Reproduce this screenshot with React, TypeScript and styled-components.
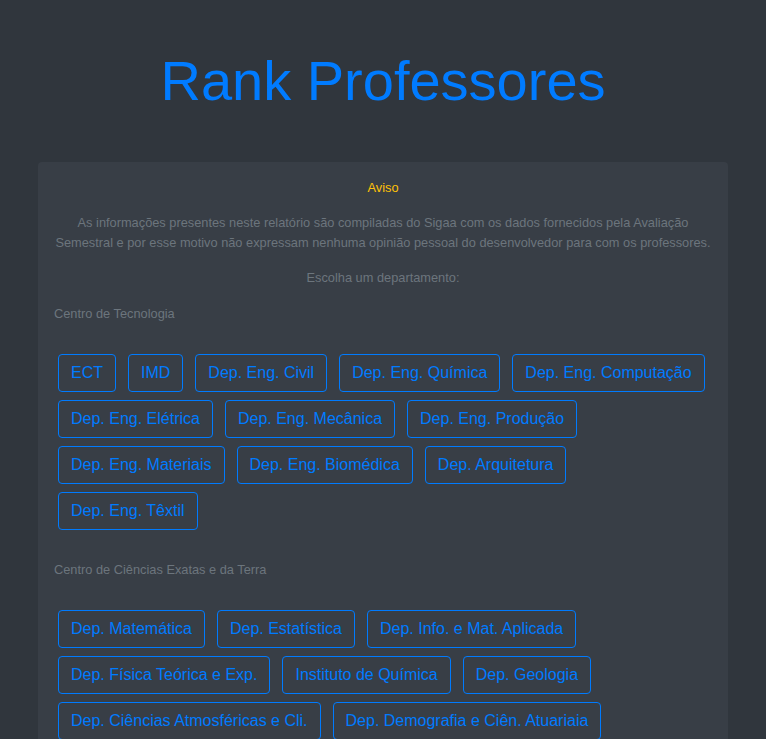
import React from "react";
import styled, { createGlobalStyle } from "styled-components";

const GlobalStyle = createGlobalStyle`
  html, body {
    margin: 0;
    padding: 0;
    background: #30363d;
  }
  body {
    font-family: "Liberation Sans", Arial, sans-serif;
  }
  * { box-sizing: border-box; }
`;

const Page = styled.div`
  min-height: 739px;
  background: #30363d;
  padding: 0 38px;
`;

const Header = styled.header`
  padding: 47px 0 48px;
  text-align: center;
`;

const Title = styled.h1`
  margin: 0;
  font-family: "Liberation Sans", Arial, sans-serif;
  font-weight: 300;
  font-size: 56px;
  line-height: 1.2;
  color: #007bff;
`;

const Card = styled.main`
  background: #383e46;
  border-radius: 4px;
  padding: 16px 16px 24px;
`;

const Notice = styled.p<{ $tone?: "warn" | "muted"; $last?: boolean }>`
  margin: 0 0 ${(p) => (p.$last ? "0" : "16px")};
  text-align: center;
  font-size: 12.8px;
  line-height: 1.5;
  color: ${(p) => (p.$tone === "warn" ? "#ffc107" : "#6c757d")};
`;

const SectionTitle = styled.h6`
  margin: 17px 0 0;
  font-size: 12.8px;
  font-weight: 400;
  line-height: 1.5;
  color: #6c757d;
`;

const ButtonGrid = styled.div`
  display: flex;
  flex-wrap: wrap;
  column-gap: 4px;
  margin-top: 27px;
  margin-bottom: 26px;
`;

const DeptButton = styled.button`
  margin: 4px;
  padding: 6px 12px;
  border: 1px solid #007bff;
  border-radius: 4px;
  background: transparent;
  color: #007bff;
  font-family: "Liberation Sans", Arial, sans-serif;
  font-size: 16px;
  line-height: 1.5;
  cursor: pointer;
  white-space: nowrap;
`;

const sections = [
  {
    name: "Centro de Tecnologia",
    depts: [
      "ECT",
      "IMD",
      "Dep. Eng. Civil",
      "Dep. Eng. Química",
      "Dep. Eng. Computação",
      "Dep. Eng. Elétrica",
      "Dep. Eng. Mecânica",
      "Dep. Eng. Produção",
      "Dep. Eng. Materiais",
      "Dep. Eng. Biomédica",
      "Dep. Arquitetura",
      "Dep. Eng. Têxtil",
    ],
  },
  {
    name: "Centro de Ciências Exatas e da Terra",
    depts: [
      "Dep. Matemática",
      "Dep. Estatística",
      "Dep. Info. e Mat. Aplicada",
      "Dep. Física Teórica e Exp.",
      "Instituto de Química",
      "Dep. Geologia",
      "Dep. Ciências Atmosféricas e Cli.",
      "Dep. Demografia e Ciên. Atuariaia",
    ],
  },
];

export default function App() {
  return (
    <>
      <GlobalStyle />
      <Page>
        <Header>
          <Title>Rank Professores</Title>
        </Header>
        <Card>
          <Notice $tone="warn">Aviso</Notice>
          <Notice>
            As informações presentes neste relatório são compiladas do Sigaa com os dados fornecidos pela Avaliação
            Semestral e por esse motivo não expressam nenhuma opinião pessoal do desenvolvedor para com os professores.
          </Notice>
          <Notice $last>Escolha um departamento:</Notice>
          {sections.map((s) => (
            <section key={s.name}>
              <SectionTitle>{s.name}</SectionTitle>
              <ButtonGrid>
                {s.depts.map((d) => (
                  <DeptButton key={d}>{d}</DeptButton>
                ))}
              </ButtonGrid>
            </section>
          ))}
        </Card>
      </Page>
    </>
  );
}
